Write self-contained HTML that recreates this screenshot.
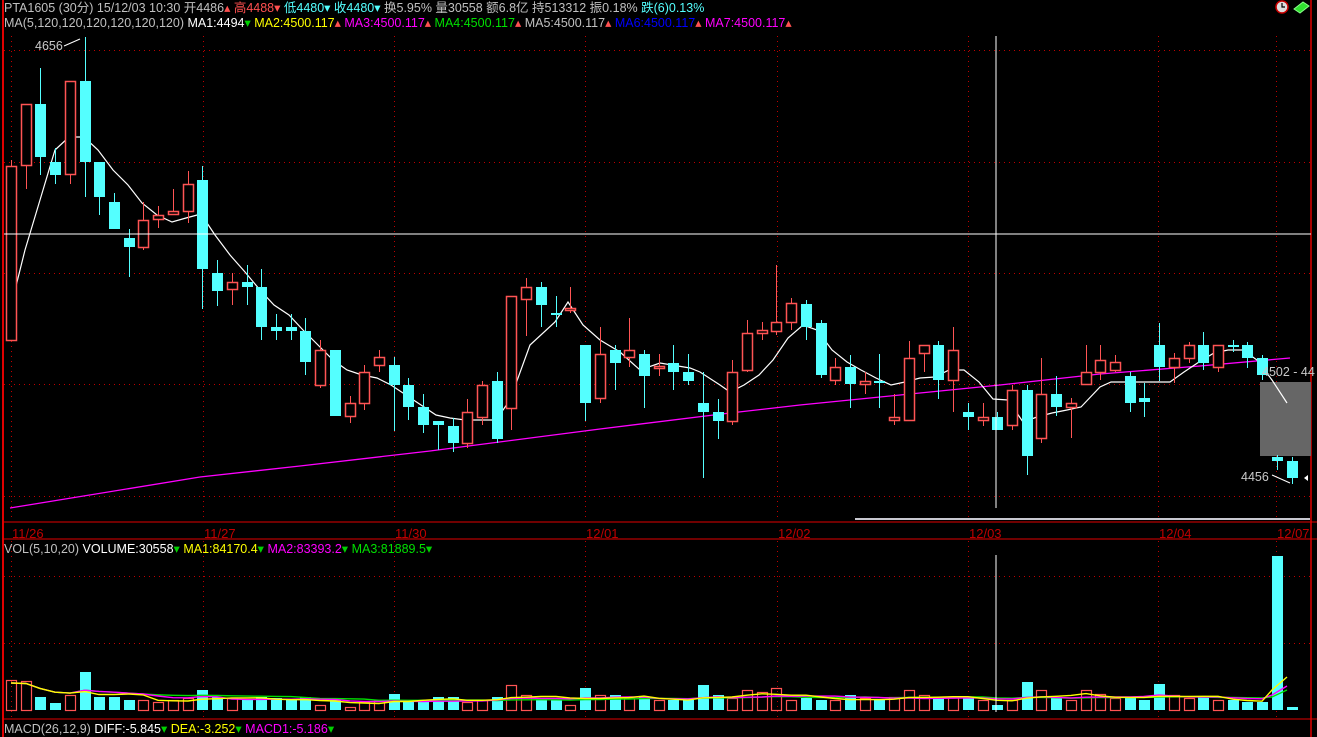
<!DOCTYPE html>
<html><head><meta charset="utf-8">
<style>
html,body{margin:0;padding:0;background:#000;width:1317px;height:737px;overflow:hidden}
svg{display:block}
text{font-family:"Liberation Sans","Noto Sans CJK SC",sans-serif;font-size:12.5px}
</style></head><body>
<svg id="s" width="1317" height="737" xmlns="http://www.w3.org/2000/svg">
<rect width="1317" height="737" fill="#000"/>
<g id="grid" stroke="#c00000" stroke-width="1" stroke-dasharray="1,4"></g>
<line x1="3" y1="0" x2="3" y2="737" stroke="#e00000" stroke-width="2"/>
<line x1="1311" y1="0" x2="1311" y2="737" stroke="#e00000" stroke-width="1.5"/>
<line x1="3" y1="522" x2="1317" y2="522" stroke="#e00000"/>
<line x1="3" y1="539" x2="1317" y2="539" stroke="#e00000"/>
<line x1="3" y1="719" x2="1317" y2="719" stroke="#e00000"/>
<line x1="855" y1="519" x2="1310" y2="519" stroke="#c8c8d0" stroke-width="2"/>
<rect x="1260" y="382" width="51" height="74" fill="#666"/>
<g id="c"></g>
<line x1="4" y1="234" x2="1311" y2="234" stroke="#fff"/>
<line x1="996" y1="36" x2="996" y2="508" stroke="#fff"/>
<line x1="996" y1="555" x2="996" y2="712" stroke="#fff"/>
<g fill="#c00000" font-size="13">
<text x="12" y="538" style="font-size:13px">11/26</text><text x="204" y="538" style="font-size:13px">11/27</text>
<text x="395" y="538" style="font-size:13px">11/30</text><text x="586" y="538" style="font-size:13px">12/01</text>
<text x="778" y="538" style="font-size:13px">12/02</text><text x="969" y="538" style="font-size:13px">12/03</text>
<text x="1159" y="538" style="font-size:13px">12/04</text><text x="1277" y="538" style="font-size:13px">12/07</text>
</g>
<text x="35" y="50" fill="#c8c8c8">4656</text>
<polyline points="64,46 80,39" stroke="#fff" fill="none"/>
<text x="1262" y="376" fill="#c8c8c8">4502 - 44</text>
<text x="1241" y="481" fill="#c8c8c8">4456</text>
<polyline points="1272,475 1290,483" stroke="#fff" fill="none"/>
<text x="4" y="12" fill="#c0c0c0">PTA1605 (30分) 15/12/03 10:30 开4486<tspan fill="#ff5050">▴</tspan><tspan fill="#ff5050"> 高4488▾</tspan><tspan fill="#54ffff"> 低4480▾ 收4480▾</tspan> 换5.95% 量30558 额6.8亿 持513312 振0.18% <tspan fill="#54ffff">跌(6)0.13%</tspan></text>
<text x="4" y="27" fill="#c0c0c0">MA(5,120,120,120,120,120,120) <tspan fill="#fff">MA1:4494</tspan><tspan fill="#00d000">▾</tspan> <tspan fill="#ffff00">MA2:4500.117</tspan><tspan fill="#ff5050">▴</tspan> <tspan fill="#ff00ff">MA3:4500.117</tspan><tspan fill="#ff5050">▴</tspan> <tspan fill="#00e000">MA4:4500.117</tspan><tspan fill="#ff5050">▴</tspan> MA5:4500.117<tspan fill="#ff5050">▴</tspan> <tspan fill="#0000ff">MA6:4500.117</tspan><tspan fill="#ff5050">▴</tspan> <tspan fill="#ff00ff">MA7:4500.117</tspan><tspan fill="#ff5050">▴</tspan></text>
<text x="4" y="553" fill="#c0c0c0">VOL(5,10,20) <tspan fill="#fff">VOLUME:30558</tspan><tspan fill="#00d000">▾</tspan> <tspan fill="#ffff00">MA1:84170.4</tspan><tspan fill="#00d000">▾</tspan> <tspan fill="#ff00ff">MA2:83393.2</tspan><tspan fill="#00d000">▾</tspan> <tspan fill="#00e000">MA3:81889.5</tspan><tspan fill="#00d000">▾</tspan></text>
<text x="4" y="733" fill="#c0c0c0">MACD(26,12,9) <tspan fill="#fff">DIFF:-5.845</tspan><tspan fill="#00d000">▾</tspan> <tspan fill="#ffff00">DEA:-3.252</tspan><tspan fill="#00d000">▾</tspan> <tspan fill="#ff00ff">MACD1:-5.186</tspan><tspan fill="#00d000">▾</tspan></text>
<circle cx="1282" cy="7" r="6" fill="#ddd" stroke="#c00" stroke-width="1.5"/>
<path d="M1282 3v4h3" stroke="#000" fill="none" stroke-width="1.2"/>
<path d="M1294 9l9-7 6 4-9 7z" fill="#30e030" stroke="#8f8" stroke-width="1"/>
</svg>
<script>
var NS="http://www.w3.org/2000/svg";
function el(p,t,a){var e=document.createElementNS(NS,t);for(var k in a)e.setAttribute(k,a[k]);p.appendChild(e);return e;}
var g=document.getElementById('grid');
[50,162,273,384,496,576,643].forEach(function(y){el(g,'line',{x1:4,y1:y+.5,x2:1311,y2:y+.5});});
[11,203,394,585,777,968,1158,1276].forEach(function(x){el(g,'line',{x1:x+.5,y1:36,x2:x+.5,y2:520});el(g,'line',{x1:x+.5,y1:541,x2:x+.5,y2:717});});
// [color, bodyTop, bodyBot, wickTop, wickBot]
var C=[['r',166,340,160,340],['r',104,165,104,189],['c',104,157,68,175],['c',162,175,148,184],['r',81,174,81,184],['c',81,162,37,197],['c',162,197,162,215],['c',202,229,193,229],['c',238,247,229,277],['r',220,247,202,250],['r',215,219,206,228],['r',211,214,189,215],['r',184,211,171,223],['c',180,269,166,309],['c',273,291,260,306],['r',282,289,273,305],['c',282,287,265,305],['c',287,327,269,340],['c',327,331,314,340],['c',327,331,314,340],['c',331,362,318,375],['r',350,385,340,388],['c',350,416,350,416],['r',403,416,396,423],['r',372,403,365,410],['r',357,365,350,372],['c',365,385,357,431],['c',385,407,378,420],['c',407,425,394,433],['c',421,425,421,450],['c',426,443,418,452],['r',412,443,399,448],['r',385,417,381,425],['c',381,439,372,443],['r',296,408,296,430],['r',287,299,278,336],['c',287,305,282,327],['c',313,315,296,327],['r',308,310,287,313],['c',345,403,345,421],['r',354,398,327,403],['c',350,363,345,390],['r',350,357,318,367],['c',354,376,350,408],['r',366,368,354,376],['c',363,372,345,390],['c',372,381,354,385],['c',403,412,372,478],['c',412,421,399,439],['r',372,421,360,425],['r',333,370,320,372],['r',330,333,322,340],['r',322,331,265,335],['r',303,322,298,330],['c',304,327,300,340],['c',323,375,320,378],['r',367,380,358,385],['c',367,384,355,408],['r',381,384,372,394],['c',381,383,354,408],['r',417,420,394,425],['r',358,420,341,420],['r',345,353,345,372],['c',345,380,341,399],['r',350,380,327,412],['c',412,417,403,430],['r',417,420,403,426],['c',417,430,412,430],['r',390,425,385,430],['c',390,456,385,475],['r',394,438,358,443],['c',394,407,376,416],['r',403,407,398,438],['r',372,384,345,385],['r',360,372,345,380],['r',362,370,355,372],['c',376,403,372,412],['c',398,402,383,417],['c',345,367,323,381],['r',358,367,353,383],['r',345,358,342,363],['c',345,363,332,370],['r',345,367,345,372],['c',345,347,340,352],['c',345,358,342,368],['c',358,375,355,380],['c',457,461,455,470],['c',461,478,457,484]];
var V=[680,681,697,703,695,672,697,697,700,700,702,700,698,690,697,698,700,697,698,700,697,705,700,707,702,700,694,700,700,697,697,702,700,697,685,695,698,700,705,688,695,695,698,697,700,700,700,685,695,698,690,692,688,700,698,700,700,695,698,700,697,690,695,697,697,697,700,705,700,682,690,697,700,690,694,698,698,700,684,695,698,697,700,700,702,702,556,707];
var cg=document.getElementById('c');
var RED='#ff5454',CY='#54ffff';
function X(i){return 11+14.72*i;}
// MA lines price
var mag=[[10,508],[200,477],[300,466],[430,451],[600,429],[730,413],[800,405],[900,395],[1000,385],[1100,374],[1200,366],[1290,358]];
el(cg,'polyline',{points:mag.map(function(p){return p.join(',')}).join(' '),stroke:'#ff00ff','stroke-width':1.3,fill:'none'});
var wh=[[10,310],[25,250],[40,200],[55,150],[69,137],[84,137],[98,150],[113,170],[128,185],[142,203],[157,215],[172,222],[186,218],[201,214],[215,235],[230,255],[245,272],[260,290],[274,305],[289,315],[303,330],[318,345],[333,360],[347,370],[362,375],[377,378],[391,385],[406,395],[421,405],[436,415],[450,418],[465,420],[480,420],[496,420],[510,400],[530,345],[555,322],[568,302],[583,325],[600,340],[620,352],[640,370],[660,363],[690,368],[700,372],[720,385],[730,392],[744,385],[759,375],[773,360],[788,338],[803,325],[817,330],[832,350],[847,362],[861,370],[876,378],[891,385],[905,382],[920,378],[935,377],[949,370],[964,370],[979,382],[993,399],[1008,400],[1023,422],[1037,417],[1052,413],[1067,410],[1081,407],[1100,387],[1111,382],[1125,382],[1140,382],[1155,382],[1170,382],[1184,372],[1199,362],[1214,353],[1228,350],[1243,350],[1257,360],[1272,380],[1287,403]];
el(cg,'polyline',{points:wh.map(function(p){return p.join(',')}).join(' '),stroke:'#fff','stroke-width':1.2,fill:'none'});
C.forEach(function(c,i){
  var x=Math.round(X(i)),col=c[0]=='r'?RED:CY;
  el(cg,'line',{x1:x+.5,y1:c[3],x2:x+.5,y2:c[4],stroke:col});
  var h=Math.max(c[2]-c[1],1);
  if(c[0]=='r') el(cg,'rect',{x:x-4.5,y:c[1]+.5,width:10,height:h,fill:'#000',stroke:col,'stroke-width':1.5});
  else el(cg,'rect',{x:x-5,y:c[1],width:11,height:h,fill:col});
  // volume
  var v=V[i];
  if(c[0]=='r') el(cg,'rect',{x:x-4.5,y:v+.5,width:10,height:710-v,fill:'none',stroke:col,'stroke-width':1.2});
  else el(cg,'rect',{x:x-5,y:v,width:11,height:710-v,fill:col});
});
// vol MAs
function smooth(n,off){var pts=[];for(var i=0;i<86;i++){var s=0,k=0;for(var j=Math.max(0,i-n+1);j<=i;j++){s+=710-V[j];k++;}pts.push(Math.round(X(i))+','+(710-s/k*0.9-off).toFixed(1));}return pts;}
var y1=smooth(5,0);y1.push('1272,690','1287,677');
var y2=smooth(10,0);y2.push('1272,695','1287,686');
var y3=smooth(20,0);y3.push('1272,697','1287,690');
el(cg,'polyline',{points:y3.join(' '),stroke:'#00e000','stroke-width':1.4,fill:'none'});
el(cg,'polyline',{points:y2.join(' '),stroke:'#ff00ff','stroke-width':1.4,fill:'none'});
el(cg,'polyline',{points:y1.join(' '),stroke:'#ffff00','stroke-width':1.4,fill:'none'});
el(cg,'path',{d:'M1304 478 l4 -3 v6z',fill:'#fff'});
</script>
</body></html>
